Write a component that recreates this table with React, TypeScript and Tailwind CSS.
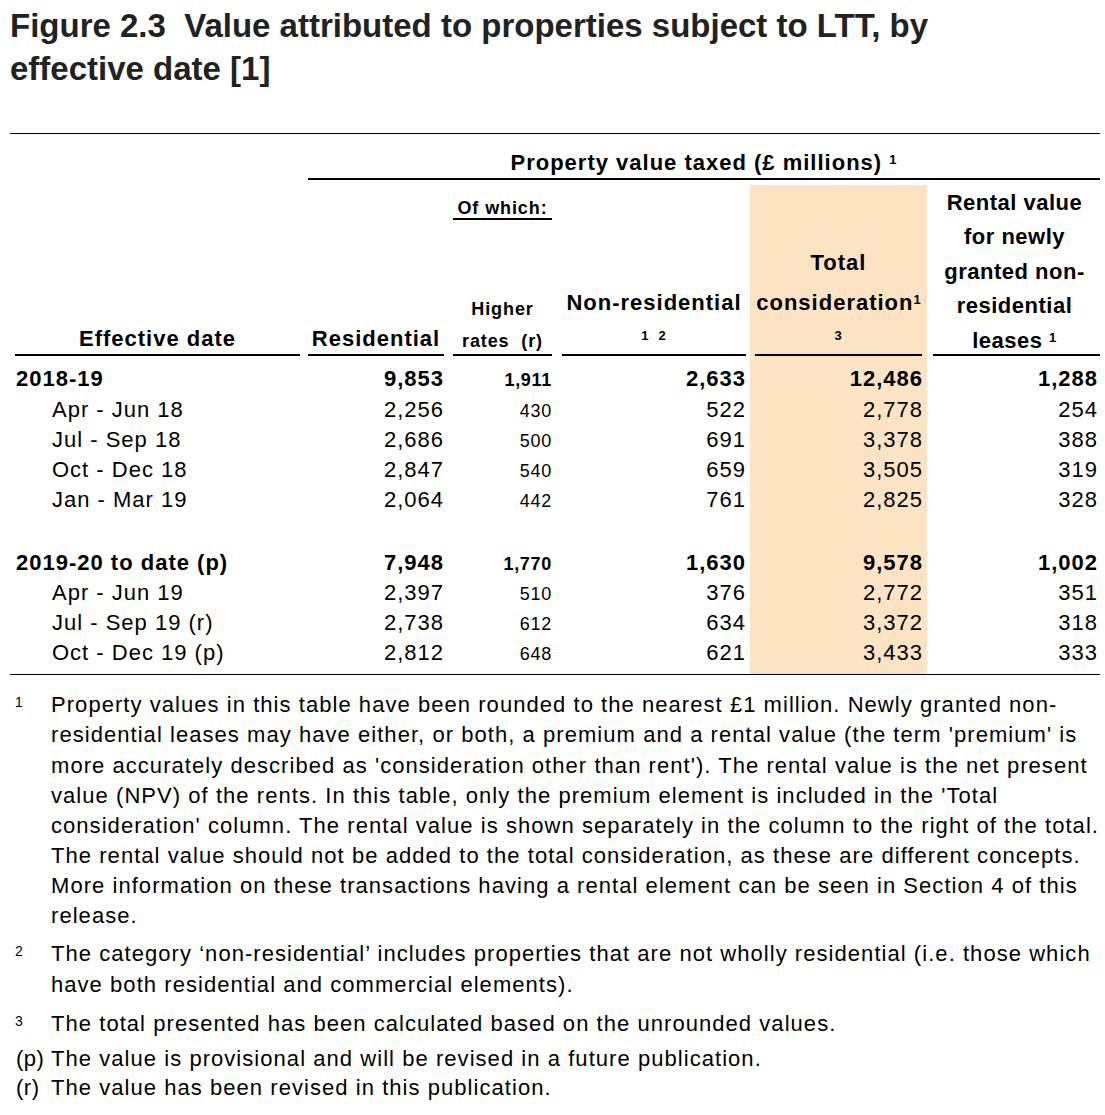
import React from "react";

const SHADE = "bg-[#fbe3c3]";

type Cell = React.ReactNode;

function DataRow({
  cells,
  bold = false,
}: {
  cells: [Cell, Cell, Cell, Cell, Cell, Cell];
  bold?: boolean;
}) {
  const w = bold ? "font-bold" : "font-normal";
  return (
    <div className={`flex items-stretch h-[30.25px] leading-[30.25px] text-[22px] tracking-[1px] ${w}`}>
      <div className={`ml-[5px] w-[285px] whitespace-pre ${bold ? "pl-[1px]" : "pl-[37px]"}`}>{cells[0]}</div>
      <div className="ml-[8px] w-[136px] text-right">{cells[1]}</div>
      <div className="ml-[9px] w-[99px] text-right text-[18px] tracking-[0.7px] pt-[3px] leading-[27.25px]">{cells[2]}</div>
      <div className="ml-[10px] w-[184px] text-right">{cells[3]}</div>
      <div className={`ml-[4px] w-[177px] text-right pr-[4px] ${SHADE}`}>{cells[4]}</div>
      <div className="ml-[6px] w-[167px] text-right pr-[2px]">{cells[5]}</div>
    </div>
  );
}

function Spacer({ h }: { h: string }) {
  return (
    <div className={`flex ${h}`}>
      <div className="ml-[5px] w-[285px]" />
      <div className="ml-[8px] w-[136px]" />
      <div className="ml-[9px] w-[99px]" />
      <div className="ml-[10px] w-[184px]" />
      <div className={`ml-[4px] w-[177px] ${SHADE}`} />
      <div className="ml-[6px] w-[167px]" />
    </div>
  );
}

function Footnote({ mark, small = true, lines, mt }: { mark: string; small?: boolean; lines: string[]; mt: string }) {
  return (
    <div className={`flex ${mt}`}>
      <div
        className={`w-[37px] shrink-0 ${small ? "text-[14px] leading-[24px] pl-[1px]" : "text-[22px] leading-[30.15px] tracking-[0.5px] pl-[2px]"}`}
      >
        {mark}
      </div>
      <div className="text-[22px] leading-[30.15px] tracking-[1.05px]">
        {lines.map((l, i) => (
          <div key={i} className="whitespace-pre">
            {l}
          </div>
        ))}
      </div>
    </div>
  );
}

export default function App() {
  return (
    <div className="w-[1105px] min-h-[1115px] bg-white text-black font-['Liberation_Sans',Arial,sans-serif]">
      {/* Title */}
      <div className="pl-[10px] pt-[4px] text-[33px] leading-[43px] font-bold text-[#222222]">
        <div className="whitespace-pre">Figure 2.3  Value attributed to properties subject to LTT, by</div>
        <div>effective date [1]</div>
      </div>

      {/* Table */}
      <div className="ml-[10px] w-[1090px] mt-[43px] border-t border-black">
        {/* Spanning header */}
        <div className="flex">
          <div className="ml-[298px] w-[792px] h-[46px] border-b-2 border-black pt-[14px] text-center text-[22px] leading-[30px] font-bold tracking-[1px]">
            Property value taxed (£ millions) <span className="text-[13px] leading-none align-[6px]">1</span>
          </div>
        </div>

        {/* Column headers */}
        <div className="flex mt-[5px] h-[171px] font-bold text-[22px] tracking-[1px]">
          <div className="ml-[5px] w-[285px] flex flex-col justify-end border-b-2 border-black text-center leading-[30px]">
            Effective date
          </div>
          <div className="ml-[8px] w-[136px] flex flex-col justify-end border-b-2 border-black text-center leading-[30px]">
            Residential
          </div>
          <div className="ml-[9px] w-[99px] flex flex-col justify-between border-b-2 border-black text-center text-[18px] tracking-[0.9px]">
            <div className="mt-[13px] leading-[20px] border-b-2 border-black">Of which:</div>
            <div className="leading-[32px] mb-[-3px]">
              <div>Higher</div>
              <div className="whitespace-pre">rates  (r)</div>
            </div>
          </div>
          <div className="ml-[10px] w-[184px] flex flex-col justify-end border-b-2 border-black text-center">
            <div className="leading-[30px]">Non-residential</div>
            <div className="leading-[36px] text-[13px] whitespace-pre">1  2</div>
          </div>
          <div className={`ml-[4px] w-[177px] flex flex-col justify-end ${SHADE}`}>
            <div className="mx-[5px] border-b-2 border-black text-center">
              <div className="leading-[30px] mb-[10px]">Total</div>
              <div className="h-[30px] leading-[30px] tracking-[1px] whitespace-nowrap">
                consideration<span className="text-[13px] leading-none align-[6px] tracking-normal">1</span>
              </div>
              <div className="leading-[36px] text-[13px]">3</div>
            </div>
          </div>
          <div className="ml-[6px] w-[167px] flex flex-col justify-end border-b-2 border-black text-center tracking-[0.5px]">
            <div className="leading-[34.5px] mb-[-4px] pr-[4px]">
              <div>Rental value</div>
              <div>for newly</div>
              <div>granted non-</div>
              <div>residential</div>
              <div className="h-[34.5px]">
                leases <span className="text-[13px] leading-none align-[6px]">1</span>
              </div>
            </div>
          </div>
        </div>

        {/* Body */}
        <Spacer h="h-[8.4px]" />
        <DataRow bold cells={["2018-19", "9,853", "1,911", "2,633", "12,486", "1,288"]} />
        <DataRow cells={["Apr - Jun 18", "2,256", "430", "522", "2,778", "254"]} />
        <DataRow cells={["Jul - Sep 18", "2,686", "500", "691", "3,378", "388"]} />
        <DataRow cells={["Oct - Dec 18", "2,847", "540", "659", "3,505", "319"]} />
        <DataRow cells={["Jan - Mar 19", "2,064", "442", "761", "2,825", "328"]} />
        <Spacer h="h-[32px]" />
        <DataRow bold cells={["2019-20 to date (p)", "7,948", "1,770", "1,630", "9,578", "1,002"]} />
        <DataRow cells={["Apr - Jun 19", "2,397", "510", "376", "2,772", "351"]} />
        <DataRow cells={["Jul - Sep 19 (r)", "2,738", "612", "634", "3,372", "318"]} />
        <DataRow cells={["Oct - Dec 19 (p)", "2,812", "648", "621", "3,433", "333"]} />
        <Spacer h="h-[5.6px]" />
        <div className="border-t border-black" />
      </div>

      {/* Footnotes */}
      <div className="ml-[14px] mt-[15px] pb-[10px]">
        <Footnote
          mt="mt-0"
          mark="1"
          lines={[
            "Property values in this table have been rounded to the nearest £1 million. Newly granted non-",
            "residential leases may have either, or both, a premium and a rental value (the term 'premium' is",
            "more accurately described as 'consideration other than rent'). The rental value is the net present",
            "value (NPV) of the rents. In this table, only the premium element is included in the 'Total",
            "consideration' column. The rental value is shown separately in the column to the right of the total.",
            "The rental value should not be added to the total consideration, as these are different concepts.",
            "More information on these transactions having a rental element can be seen in Section 4 of this",
            "release.",
          ]}
        />
        <Footnote
          mt="mt-[8px]"
          mark="2"
          lines={[
            "The category ‘non-residential’ includes properties that are not wholly residential (i.e. those which",
            "have both residential and commercial elements).",
          ]}
        />
        <Footnote mt="mt-[9px]" mark="3" lines={["The total presented has been calculated based on the unrounded values."]} />
        <Footnote
          mt="mt-[5px]"
          mark="(p)"
          small={false}
          lines={["The value is provisional and will be revised in a future publication."]}
        />
        <Footnote mt="mt-[-1px]" mark="(r)" small={false} lines={["The value has been revised in this publication."]} />
      </div>
    </div>
  );
}
